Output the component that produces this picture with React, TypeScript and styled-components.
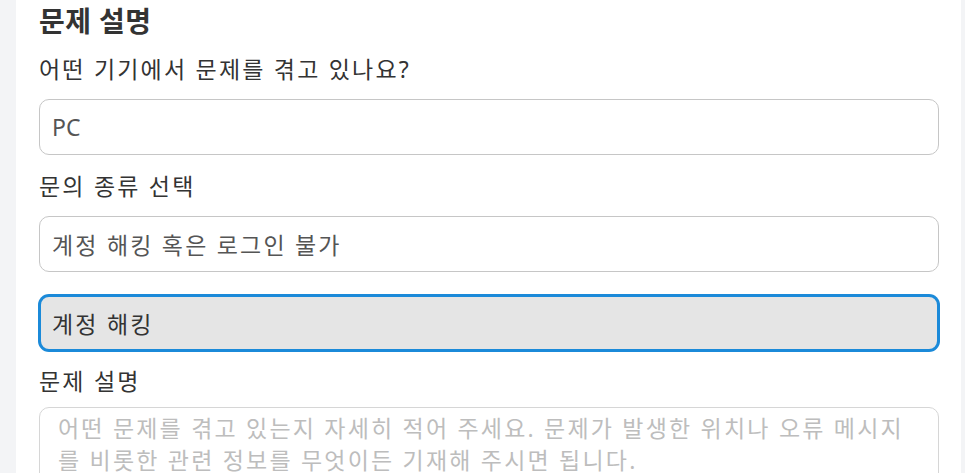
import React from "react";
import styled, { createGlobalStyle } from "styled-components";

const Global = createGlobalStyle`
  html, body { margin: 0; padding: 0; background: #f3f4f6; }
  body { font-family: "Noto Sans", "Noto Sans CJK KR", sans-serif; color: #333; }
  * { box-sizing: border-box; }
`;

const Page = styled.div`
  height: 473px;
  overflow: hidden;
  padding-left: 16px;
  padding-right: 4px;
`;

const Panel = styled.div`
  background: #fff;
  min-height: 100%;
  padding: 3px 22px 0 23px;
`;

const Title = styled.h2`
  margin: 0;
  font-size: 28px;
  font-weight: 700;
  line-height: 36px;
  letter-spacing: 0.4px;
  color: #333;
`;

const Label = styled.label<{ $top: number; $bottom: number }>`
  display: block;
  font-size: 23px;
  letter-spacing: 2.2px;
  line-height: 30px;
  color: #333;
  margin-top: ${(p) => p.$top}px;
  margin-bottom: ${(p) => p.$bottom}px;
`;

const Field = styled.div<{ $focused?: boolean; $latin?: boolean }>`
  height: 56px;
  border: 1px solid #c6c6c6;
  border-radius: 10px;
  background: #fff;
  padding: 0 12px;
  display: flex;
  align-items: center;
  font-size: 23px;
  letter-spacing: ${(p) => (p.$latin ? "0" : "2.2px")};
  color: #555;
  ${(p) =>
    p.$focused &&
    `
    background: #e5e5e5;
    border: 2px solid #1b8ad9;
    box-shadow: 0 0 0 1px #1b8ad9;
    padding: 0 11px;
    color: #333;
    margin-top: 23px;
  `}
`;

const TextArea = styled.textarea`
  display: block;
  width: 100%;
  height: 120px;
  border: 1px solid #d6d6d6;
  border-radius: 10px;
  padding: 4px 24px 4px 18px;
  font-family: inherit;
  font-size: 23px;
  letter-spacing: 2.2px;
  line-height: 32px;
  color: #333;
  resize: none;
  outline: none;
  &::placeholder { color: #bdbdbd; }
`;

export default function App() {
  return (
    <>
      <Global />
      <Page>
        <Panel>
          <Title>문제 설명</Title>
          <Label $top={15} $bottom={15}>어떤 기기에서 문제를 겪고 있나요?</Label>
          <Field $latin>PC</Field>
          <Label $top={16} $bottom={15}>문의 종류 선택</Label>
          <Field>계정 해킹 혹은 로그인 불가</Field>
          <Field $focused>계정 해킹</Field>
          <Label $top={15} $bottom={11}>문제 설명</Label>
          <TextArea placeholder="어떤 문제를 겪고 있는지 자세히 적어 주세요. 문제가 발생한 위치나 오류 메시지를 비롯한 관련 정보를 무엇이든 기재해 주시면 됩니다." />
        </Panel>
      </Page>
    </>
  );
}
